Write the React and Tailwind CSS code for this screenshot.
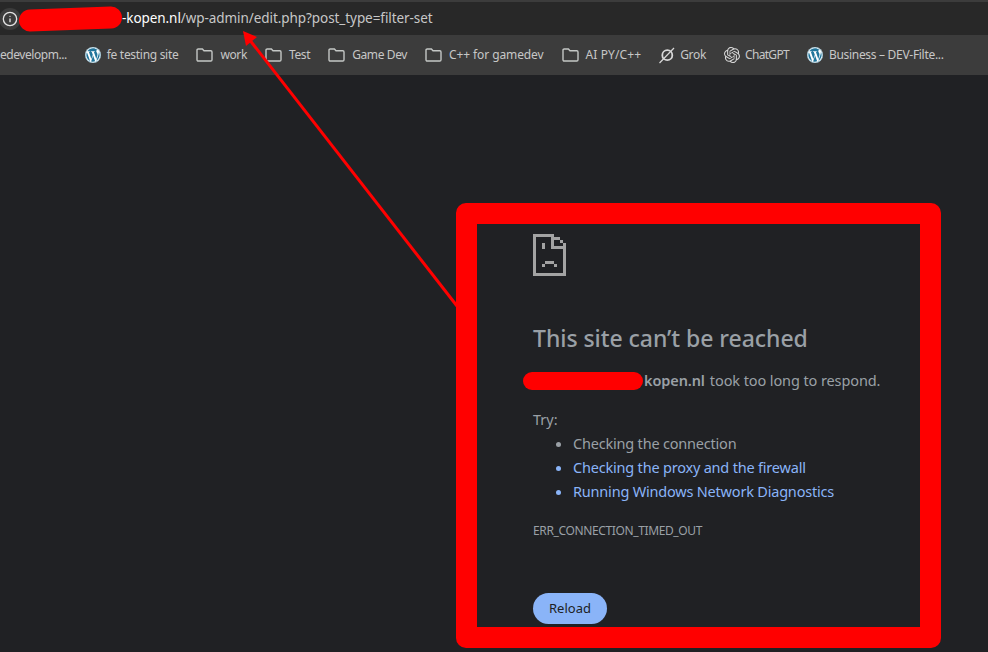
import { Info } from "lucide-react";
import { FaWordpress } from "react-icons/fa";
import { SiOpenai } from "react-icons/si";

const font = "font-['Noto_Sans','Liberation_Sans',sans-serif]";

function FolderIcon() {
  return (
    <svg width="17" height="14" viewBox="0 0 17 14" fill="none" stroke="#c4c7c5" strokeWidth="1.4" className="mr-[7px] shrink-0">
      <path d="M1 2.2C1 1.5 1.5 1 2.2 1H6.4L8 2.8H14.8C15.5 2.8 16 3.3 16 4V11.8C16 12.5 15.5 13 14.8 13H2.2C1.5 13 1 12.5 1 11.8V2.2Z" />
    </svg>
  );
}

function WpIcon() {
  return (
    <span className="mr-[6px] flex h-4 w-4 shrink-0 items-center justify-center rounded-full bg-white">
      <FaWordpress className="h-4 w-4 text-[#21759b]" />
    </span>
  );
}

function GrokIcon() {
  return (
    <svg width="16" height="17" viewBox="0 0 16 17" fill="none" stroke="#d8d8d8" className="mr-[5px] shrink-0">
      <circle cx="8.3" cy="8.2" r="5" strokeWidth="1.8" />
      <path d="M0.5 16L15 1" strokeWidth="1.2" />
    </svg>
  );
}

function Bookmark({ icon, label, track = "tracking-[-0.38px]" }) {
  return (
    <div className="flex shrink-0 items-center">
      {icon}
      <span className={`text-[12px] whitespace-nowrap text-[#c7c7c7] ${track}`}>{label}</span>
    </div>
  );
}

function SadFile() {
  const cells = [
    [0, 0, 1, 14], [0, 13, 11, 1], [10, 3, 1, 11], [0, 0, 7, 1], [6, 0, 1, 5], [6, 4, 5, 1],
    [7, 1, 1, 1], [8, 1, 1, 1], [9, 2, 1, 1], [3, 3, 1, 2], [4, 9, 3, 1], [3, 10, 1, 1], [7, 10, 1, 1],
  ];
  return (
    <svg width="33" height="42" viewBox="0 0 11 14" fill="#a3a3a3" shapeRendering="crispEdges" className="block">
      {cells.map(([x, y, w, h], i) => (
        <rect key={i} x={x} y={y} width={w} height={h} />
      ))}
    </svg>
  );
}

export default function App() {
  return (
    <div className={`relative h-[652px] w-[988px] overflow-hidden bg-[#202124] ${font}`}>
      <div className="flex h-[35px] items-center border-t-2 border-[#3c3c3c] bg-[#282828]">
        <div className="-ml-[1px] flex h-[22px] w-[22px] shrink-0 items-center justify-center rounded-full bg-[#3c3c3c]">
          <Info className="h-[16px] w-[16px] text-[#e3e3e3]" strokeWidth={2} />
        </div>
        <div className="-ml-[2px] h-[22px] w-[103px] shrink-0 -rotate-2 rounded-full bg-[#ff0000]" />
        <div className="text-[13.5px] tracking-[-0.07px] whitespace-nowrap text-[#c7c7c7]">
          <span className="text-white">-kopen.nl</span>/wp-admin/edit.php?post_type=filter-set
        </div>
      </div>

      <div className="flex h-[40px] items-center gap-[18px] overflow-hidden bg-[#3c3c3c]">
        <Bookmark label="edevelopm..." track="tracking-[-0.45px]" />
        <Bookmark icon={<WpIcon />} label="fe testing site" track="tracking-[-0.3px]" />
        <Bookmark icon={<FolderIcon />} label="work" />
        <Bookmark icon={<FolderIcon />} label="Test" />
        <Bookmark icon={<FolderIcon />} label="Game Dev" />
        <Bookmark icon={<FolderIcon />} label="C++ for gamedev" track="tracking-[-0.1px]" />
        <Bookmark icon={<FolderIcon />} label="AI PY/C++" track="tracking-[0.1px]" />
        <Bookmark icon={<GrokIcon />} label="Grok" track="tracking-[-0.3px]" />
        <Bookmark icon={<SiOpenai className="mr-[5px] h-4 w-4 shrink-0 text-[#d8d8d8]" />} label="ChatGPT" track="tracking-[-0.7px]" />
        <Bookmark icon={<WpIcon />} label="Business – DEV-Filte..." track="tracking-[-0.3px]" />
      </div>

      <div className="pt-[128px] pl-[456px]">
        <div className="h-[445px] w-[485px] rounded-[10px] border-[21px] border-[#ff0000] pt-[10px] pl-[56px] text-[#9aa0a6]">
          <SadFile />
          <h1 className="mt-[45px] text-[23px] leading-[34px] font-medium tracking-[-0.05px]">This site can’t be reached</h1>
          <p className="mt-[14px] flex h-[24px] items-center text-[14.5px] tracking-[-0.1px] whitespace-nowrap">
            <span className="-ml-[10px] inline-block h-[18px] w-[120px] rounded-full bg-[#ff0000]" />
            <b className="ml-[1px] font-semibold">kopen.nl</b>
            <span className="ml-[5px]">took too long to respond.</span>
          </p>
          <p className="mt-[14px] text-[14.5px] leading-[24px]">Try:</p>
          <ul className="list-disc pl-[40px] text-[14.5px] leading-[24px] tracking-[-0.2px]">
            <li>Checking the connection</li>
            <li className="text-[#8ab4f8]">Checking the proxy and the firewall</li>
            <li className="text-[#8ab4f8]">Running Windows Network Diagnostics</li>
          </ul>
          <p className="mt-[19px] text-[12px] leading-[18px] tracking-[-0.37px]">ERR_CONNECTION_TIMED_OUT</p>
          <button type="button" className="mt-[53px] h-[31px] w-[74px] rounded-full bg-[#8ab4f8] pt-[1px] text-[13px] text-[#202124]">
            Reload
          </button>
        </div>
      </div>

      <svg className="pointer-events-none absolute top-0 left-0" width="988" height="652">
        <path d="M457 306L249 39" stroke="#ff0000" strokeWidth="3" />
        <path d="M243 31L246 46L257 37Z" fill="#ff0000" />
      </svg>
    </div>
  );
}
